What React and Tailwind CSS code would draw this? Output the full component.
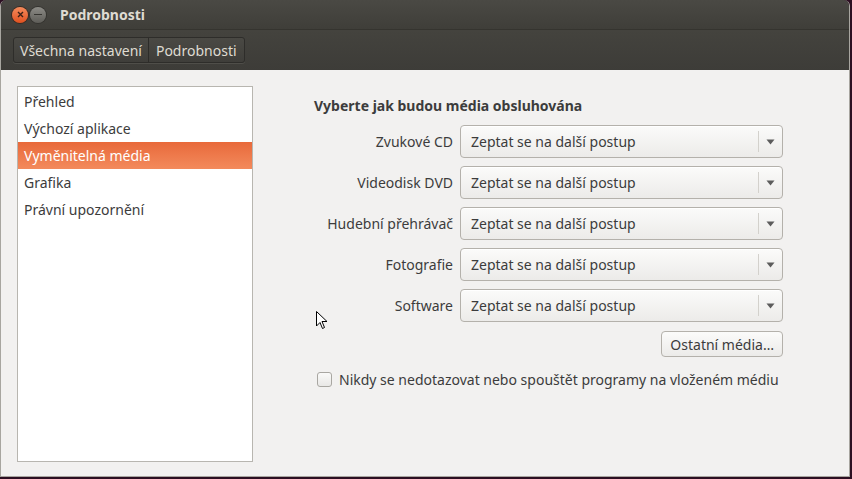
import React from "react";

const rows = ["Zvukové CD", "Videodisk DVD", "Hudební přehrávač", "Fotografie", "Software"];
const items = ["Přehled", "Výchozí aplikace", "Vyměnitelná média", "Grafika", "Právní upozornění"];

const Combo = () => (
  <div className="flex h-[33px] w-[323px] items-center rounded-[4px] border border-[#b4b1ab] bg-gradient-to-b from-[#fbfbfa] to-[#ecebe9] shadow-[inset_0_1px_0_#ffffff]">
    <span className="flex-1 pl-[10px] text-[#3c3c3c]">Zeptat se na další postup</span>
    <div className="h-[21px] w-px bg-[#d3d1cc]" />
    <div className="flex w-[23px] justify-center">
      <svg width="9" height="6" viewBox="0 0 9 6">
        <path d="M0.5 0.5 L8.5 0.5 L4.5 5.5 Z" fill="#5c5c5c" />
      </svg>
    </div>
  </div>
);

export default function App() {
  return (
    <div
      className="relative flex h-[479px] w-[852px] flex-col bg-[#2c0f22] text-[14px]"
      style={{ fontFamily: '"Noto Sans", "Open Sans", sans-serif' }}
    >
      <div className="mr-[2px] flex h-[477px] flex-col overflow-hidden rounded-t-[6px] border-x border-b border-[#a8a6a0]">
        {/* title bar */}
        <div className="flex h-[29px] items-center bg-gradient-to-b from-[#4a4944] to-[#3f3e39] pl-[11px]">
          <div className="flex h-[16px] w-[16px] items-center justify-center rounded-full bg-gradient-to-b from-[#f58a5a] to-[#e0501d] shadow-[0_0_0_1px_#3a2a22]">
            <svg width="7" height="7" viewBox="0 0 7 7">
              <path d="M1 1 L6 6 M6 1 L1 6" stroke="#3b2117" strokeWidth="1.4" />
            </svg>
          </div>
          <div className="ml-[2px] flex h-[16px] w-[16px] items-center justify-center rounded-full bg-gradient-to-b from-[#8d8c87] to-[#5e5d58] shadow-[0_0_0_1px_#34332f]">
            <div className="h-[1.5px] w-[8px] bg-[#363531]" />
          </div>
          <span className="ml-[14px] font-bold text-[#dfdbd2]">Podrobnosti</span>
        </div>
        {/* toolbar */}
        <div className="flex h-[41px] items-center border-t border-[#35342f] bg-gradient-to-b from-[#44433e] to-[#3d3c38] pl-[12px]">
          <div className="flex h-[26px] items-stretch rounded-[3px] border border-[#2e2d2a] bg-gradient-to-b from-[#4a4944] to-[#3f3e3a] text-[#dfdbd2] shadow-[0_1px_0_#4f4e49]">
            <span className="flex items-center border-r border-[#2d2c29] px-[6px]">Všechna nastavení</span>
            <span className="flex items-center px-[7px]">Podrobnosti</span>
          </div>
        </div>
        {/* content */}
        <div className="flex flex-1 bg-[#f2f1f0] pt-[16px] pl-[16px]">
          <div className="mb-[14px] w-[236px] border border-[#b8b6b0] bg-white pt-[1px] text-[#3c3c3c]">
            {items.map((it, i) => (
              <div
                key={it}
                className={
                  i === 2
                    ? "flex h-[27px] items-center bg-gradient-to-b from-[#e8693a] to-[#f38a5c] pl-[6px] text-white"
                    : "flex h-[27px] items-center pl-[6px]"
                }
              >
                {it}
              </div>
            ))}
          </div>
          <div className="ml-[61px] flex w-[469px] flex-col pt-[9px] text-[#3c3c3c]">
            <div className="pb-[9px] font-bold">Vyberte jak budou média obsluhována</div>
            <div className="flex flex-col gap-[8px]">
              {rows.map((r) => (
                <div key={r} className="flex items-center justify-end">
                  <span className="mr-[7px]">{r}</span>
                  <Combo />
                </div>
              ))}
            </div>
            <div className="mt-[9px] flex justify-end">
              <div className="flex h-[26px] items-center rounded-[4px] border border-[#b4b1ab] bg-gradient-to-b from-[#fbfbfa] to-[#ecebe9] px-[8px]">
                Ostatní média…
              </div>
            </div>
            <div className="mt-[12px] flex items-center pl-[3px]">
              <div className="h-[15px] w-[15px] rounded-[3px] border border-[#a9a7a2] bg-gradient-to-b from-[#fafaf9] to-[#e9e8e6]" />
              <span className="ml-[7px]">Nikdy se nedotazovat nebo spouštět programy na vloženém médiu</span>
            </div>
          </div>
        </div>
      </div>
      {/* mouse pointer */}
      <svg className="absolute left-[316px] top-[311px]" width="12" height="19" viewBox="0 0 12 19">
        <path d="M0.5 0.5 L0.5 15 L4 11.5 L6.5 17.5 L8.5 16.5 L6 10.5 L11 10.5 Z" fill="#ffffff" stroke="#000000" strokeWidth="1" />
      </svg>
    </div>
  );
}
